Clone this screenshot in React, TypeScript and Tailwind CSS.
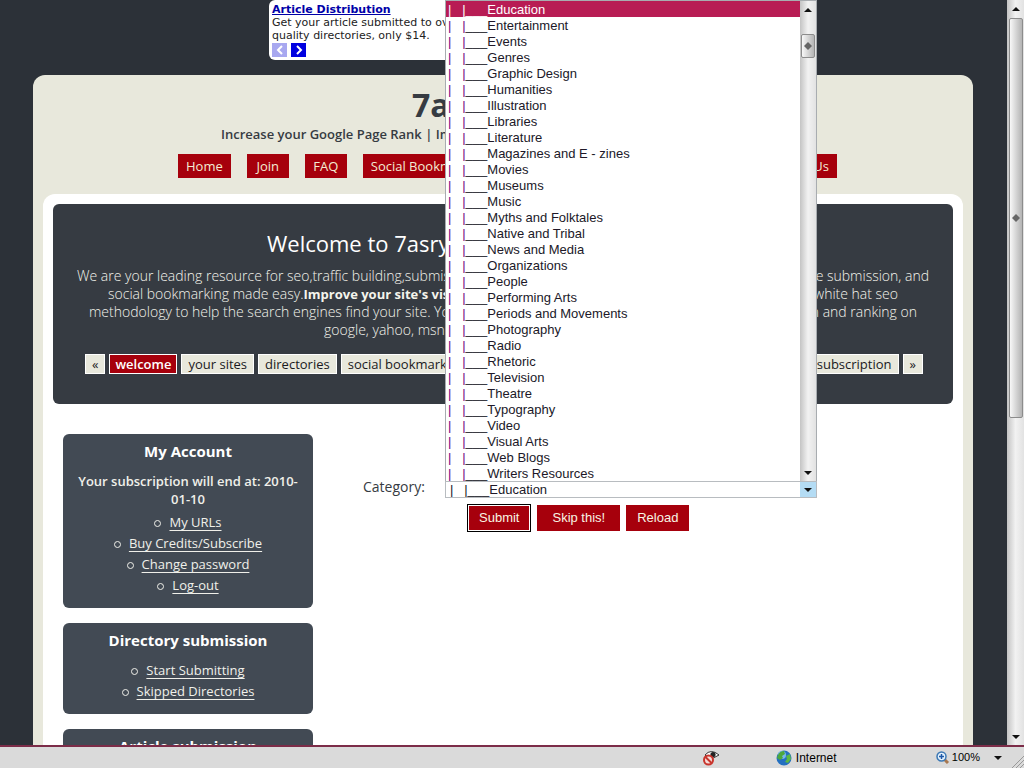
import React, { useState } from 'react';

const categories = [
  'Education', 'Entertainment', 'Events', 'Genres', 'Graphic Design', 'Humanities',
  'Illustration', 'Libraries', 'Literature', 'Magazines and E - zines', 'Movies', 'Museums',
  'Music', 'Myths and Folktales', 'Native and Tribal', 'News and Media', 'Organizations',
  'People', 'Performing Arts', 'Periods and Movements', 'Photography', 'Radio', 'Rhetoric',
  'Television', 'Theatre', 'Typography', 'Video', 'Visual Arts', 'Web Blogs', 'Writers Resources',
];

const accountLinks = ['My URLs', 'Buy Credits/Subscribe', 'Change password', 'Log-out'];
const directoryLinks = ['Start Submitting', 'Skipped Directories'];

const Arrow: React.FC<{ up?: boolean }> = ({ up }) => (
  <svg width="8" height="4" viewBox="0 0 8 4" aria-hidden="true">
    <path d={up ? 'M4 0L8 4H0Z' : 'M0 0H8L4 4Z'} fill="#111" />
  </svg>
);

const Diamond: React.FC = () => (
  <svg width="8" height="8" viewBox="0 0 8 8" aria-hidden="true">
    <path d="M4 0L8 4L4 8L0 4Z" fill="#666" />
  </svg>
);

const ScrollBar: React.FC<{ thumb: string; spacer: string; width: string }> = ({ thumb, spacer, width }) => (
  <div className={`flex shrink-0 flex-col items-center bg-linear-to-r from-[#c4c4c4] via-[#f2f2f2] to-[#e2e2e2] ${width}`}>
    <div className="flex h-[17px] shrink-0 items-center"><Arrow up /></div>
    <div className={`shrink-0 ${spacer}`}></div>
    <div className={`flex w-[14px] shrink-0 items-center justify-center rounded-xs border border-[#8c8c8c] bg-linear-to-r from-[#f8f8f8] to-[#b4b4b4] ${thumb}`}>
      <Diamond />
    </div>
    <div className="flex-1"></div>
    <div className="flex h-[17px] shrink-0 items-center"><Arrow /></div>
  </div>
);

const NavLink: React.FC<{ children: React.ReactNode }> = ({ children }) => (
  <a href="#" className="min-w-[42px] bg-[#a6000c] px-2 text-center text-[13px] leading-6 font-medium whitespace-nowrap text-[#f4ecd4]">{children}</a>
);

const Tab: React.FC<{ active?: boolean; children: React.ReactNode }> = ({ active, children }) => (
  <a
    href="#"
    className={
      active
        ? 'border border-white bg-[#a6000c] px-[5px] text-[13px] leading-[18px] font-semibold whitespace-nowrap text-white'
        : 'border border-white bg-[#e8e8dc] px-1.5 text-[13px] leading-[18px] whitespace-nowrap text-[#1a1a22]'
    }
  >
    {children}
  </a>
);

const Card: React.FC<{ title: string; note?: string; links: string[] }> = ({ title, note, links }) => (
  <section className="rounded-md bg-[#424a54] px-2 pt-[7px] pb-3 text-center text-[13px] text-[#f0f0ea]">
    <h3 className="mb-2.5 text-[15px] leading-5 font-bold text-white">{title}</h3>
    {note && <p className="mb-1 pt-px leading-[18px] font-semibold">{note}</p>}
    <ul>
      {links.map((link) => (
        <li key={link} className="flex items-center justify-center gap-2 leading-[21px]">
          <span className="mt-0.5 size-[7px] rounded-full border border-[#f0f0ea]"></span>
          <a href="#" className="underline underline-offset-3 [text-decoration-skip-ink:none]">{link}</a>
        </li>
      ))}
    </ul>
  </section>
);

const StatusBar: React.FC = () => (
  <footer className="flex h-[23px] shrink-0 items-center border-t-2 border-[#7c2c48] bg-[#dadada] font-['Liberation_Sans',sans-serif] text-[11px] text-black">
    <div className="flex-1"></div>
    <svg width="17" height="16" viewBox="0 0 17 16" aria-label="Privacy report">
      <path d="M2 5Q8 -2 16 5Q11 9 5 8Z" fill="#fff" stroke="#333" />
      <circle cx="10" cy="4.5" r="2.6" fill="#222" />
      <circle cx="5.5" cy="10" r="4.5" fill="#f6dcd8" stroke="#c8342c" strokeWidth="2" />
      <path d="M2.5 7L8.5 13" stroke="#c8342c" strokeWidth="2" />
    </svg>
    <div className="ml-14 flex w-[160px] items-center gap-1">
      <svg width="16" height="16" viewBox="0 0 16 16" aria-hidden="true">
        <circle cx="8" cy="8" r="7.5" fill="#2470c0" />
        <circle cx="6" cy="5" r="4" fill="#78b8ec" />
        <path d="M2 5Q4 1 8 1L9 4L6 6L7 8L4 10L1 8Z" fill="#4ca83c" />
        <path d="M10 6L14 4L15 9L12 13L9 12L11 9Z" fill="#5cb844" />
      </svg>
      <span className="text-xs">Internet</span>
    </div>
    <button className="flex items-center gap-0.5">
      <svg width="14" height="14" viewBox="0 0 14 14" aria-hidden="true">
        <path d="M8 8L12 12" stroke="#a87850" strokeWidth="3" />
        <circle cx="5.5" cy="5.5" r="4.5" fill="#e4f2fc" stroke="#3c78b4" strokeWidth="1.5" />
        <path d="M3 5.5H8M5.5 3V8" stroke="#1c58a8" strokeWidth="1.5" />
      </svg>
      <span className="mr-3">100%</span>
      <Arrow />
    </button>
    <svg className="ml-2.5 self-end" width="12" height="12" viewBox="0 0 12 12" aria-hidden="true">
      <path d="M0 12L12 0M4 12L12 4M8 12L12 8" stroke="#999" />
    </svg>
  </footer>
);

const CategorySelect: React.FC = () => {
  const [selected, setSelected] = useState('Education');

  return (
    <div className="relative w-[372px] font-['Liberation_Sans',sans-serif] text-[13px] text-[#201828]">
      <select
        id="category"
        value={selected}
        onChange={(e) => setSelected(e.target.value)}
        className="block h-[17px] w-full appearance-none border border-[#b8bcc0] bg-white pl-1 leading-[15px] outline-none"
      >
        {categories.map((name) => (
          <option key={name} value={name}>{`|\u00a0\u00a0\u00a0|___${name}`}</option>
        ))}
      </select>
      <div className="pointer-events-none absolute top-px right-px flex h-[15px] w-4 items-center justify-center bg-[#b4dcf4]">
        <Arrow />
      </div>
      {/* open list, sits on top of the page above the field */}
      <div className="absolute bottom-full left-0 z-10 flex w-full border-x border-t border-[#a8acb0] bg-white">
        <ul role="listbox" aria-label="Category" className="flex-1">
          {categories.map((name) => (
            <li
              key={name}
              role="option"
              aria-selected={name === selected}
              onClick={() => setSelected(name)}
              className={name === selected ? 'bg-[#b81c54] pt-0.5 pl-0.5 leading-[14px] text-white' : 'pt-0.5 pl-0.5 leading-[14px]'}
            >
              <span className={name === selected ? 'whitespace-pre' : 'whitespace-pre text-[#700080]'}>{'|   |'}</span>
              ___{name}
            </li>
          ))}
        </ul>
        <ScrollBar thumb="h-6" spacer="h-4" width="w-4" />
      </div>
    </div>
  );
};

const App: React.FC = () => {
  return (
    <div className="flex h-screen flex-col overflow-hidden bg-[#2c3138] font-['Open_Sans',sans-serif]">
      <div className="flex min-h-0 flex-1">
        <main className="min-w-0 flex-1 overflow-hidden pr-px">
          <aside className="mx-auto h-[60px] max-w-[468px] rounded-md bg-white px-[3px] pt-[3px] font-['DejaVu_Sans',sans-serif] text-[11px] leading-[13px] text-[#222]">
            <a href="#" className="block font-bold text-[#0000a8] underline">Article Distribution</a>
            <p>Get your article submitted to over</p>
            <p>quality directories, only $14.</p>
            <div className="mt-px flex gap-1">
              <button aria-label="Previous" className="flex h-3.5 w-[15px] items-center justify-center bg-[#a8a8f0]">
                <svg width="8" height="10" viewBox="0 0 8 10"><path d="M6 1L2 5L6 9" fill="none" stroke="#fff" strokeWidth="2" /></svg>
              </button>
              <button aria-label="Next" className="flex h-3.5 w-[15px] items-center justify-center bg-[#0000e0]">
                <svg width="8" height="10" viewBox="0 0 8 10"><path d="M2 1L6 5L2 9" fill="none" stroke="#fff" strokeWidth="2" /></svg>
              </button>
            </div>
          </aside>

          <div className="mx-auto mt-[15px] max-w-[940px] rounded-t-xl bg-[#e8e8dc] px-2.5 pt-3">
            <header className="text-[#363b42]">
              <h1 className="mx-auto w-[182px] text-[32px] leading-9 font-bold">7asry</h1>
              <p className="mx-auto mt-0.5 w-[564px] text-[13px] leading-[18px] font-semibold">Increase your Google Page Rank | Improve</p>
              <nav className="mt-[11px] ml-[135px] flex w-[659px] justify-between">
                <div className="flex gap-4">
                  <NavLink>Home</NavLink>
                  <NavLink>Join</NavLink>
                  <NavLink>FAQ</NavLink>
                  <NavLink>Social Bookmarking</NavLink>
                </div>
                <NavLink>Contact Us</NavLink>
              </nav>
            </header>

            <div className="mt-4 h-[600px] rounded-t-xl bg-white p-2.5">
              <section className="rounded-md bg-[#363b42] pt-[26px] pb-[30px] text-[#e8e8dc]">
                <h2 className="mx-auto w-[472px] text-[22px] leading-[26px] text-white">Welcome to 7asry</h2>
                <div className="mt-[11px] text-sm leading-[18px] font-light whitespace-nowrap text-[#f4f4ec]">
                  <p className="mx-auto flex w-[852px] justify-between">
                    <span>We are your leading resource for seo,traffic building,submission</span>
                    <span>site submission, and</span>
                  </p>
                  <p className="mx-auto flex w-[790px] justify-between">
                    <span>social bookmarking made easy.<b className="text-[13px] font-bold">Improve your site's visibility</b></span>
                    <span>white hat seo</span>
                  </p>
                  <p className="mx-auto flex w-[828px] justify-between">
                    <span>methodology to help the search engines find your site. You</span>
                    <span>in and ranking on</span>
                  </p>
                  <p className="mx-auto w-[358px]">google, yahoo, msn</p>
                </div>
                <div className="mt-[15px] ml-8 flex w-[838px] justify-between">
                  <div className="flex gap-1">
                    <Tab>«</Tab>
                    <Tab active>welcome</Tab>
                    <Tab>your sites</Tab>
                    <Tab>directories</Tab>
                    <Tab>social bookmarking</Tab>
                  </div>
                  <div className="flex gap-1">
                    <Tab>subscription</Tab>
                    <Tab>»</Tab>
                  </div>
                </div>
              </section>

              <div className="mt-[30px] flex px-2.5">
                <div className="flex w-[250px] shrink-0 flex-col gap-[15px]">
                  <Card title="My Account" note="Your subscription will end at: 2010-01-10" links={accountLinks} />
                  <Card title="Directory submission" links={directoryLinks} />
                  <Card title="Article submission" links={[]} />
                </div>
                <form className="mt-[47px] ml-[50px]" onSubmit={(e) => e.preventDefault()}>
                  <div className="flex">
                    <label htmlFor="category" className="w-[82px] text-sm leading-3 text-[#363b42]">Category:</label>
                    <CategorySelect />
                  </div>
                  <div className="mt-1.5 ml-[104px] flex gap-1.5 font-['Liberation_Sans',sans-serif] text-[13px] text-[#f8f4e4]">
                    <button type="submit" className="h-7 border border-black bg-[#a6000c] px-[11px] ring-1 ring-white ring-inset">Submit</button>
                    <button type="button" className="h-7 border-y border-white bg-[#a6000c] px-[15px]">Skip this!</button>
                    <button type="button" className="h-7 border-y border-white bg-[#a6000c] px-[11px]">Reload</button>
                  </div>
                </form>
              </div>
            </div>
          </div>
        </main>
        <ScrollBar thumb="h-[400px]" spacer="h-px" width="w-[17px]" />
      </div>
      <StatusBar />
    </div>
  );
};

export default App;
